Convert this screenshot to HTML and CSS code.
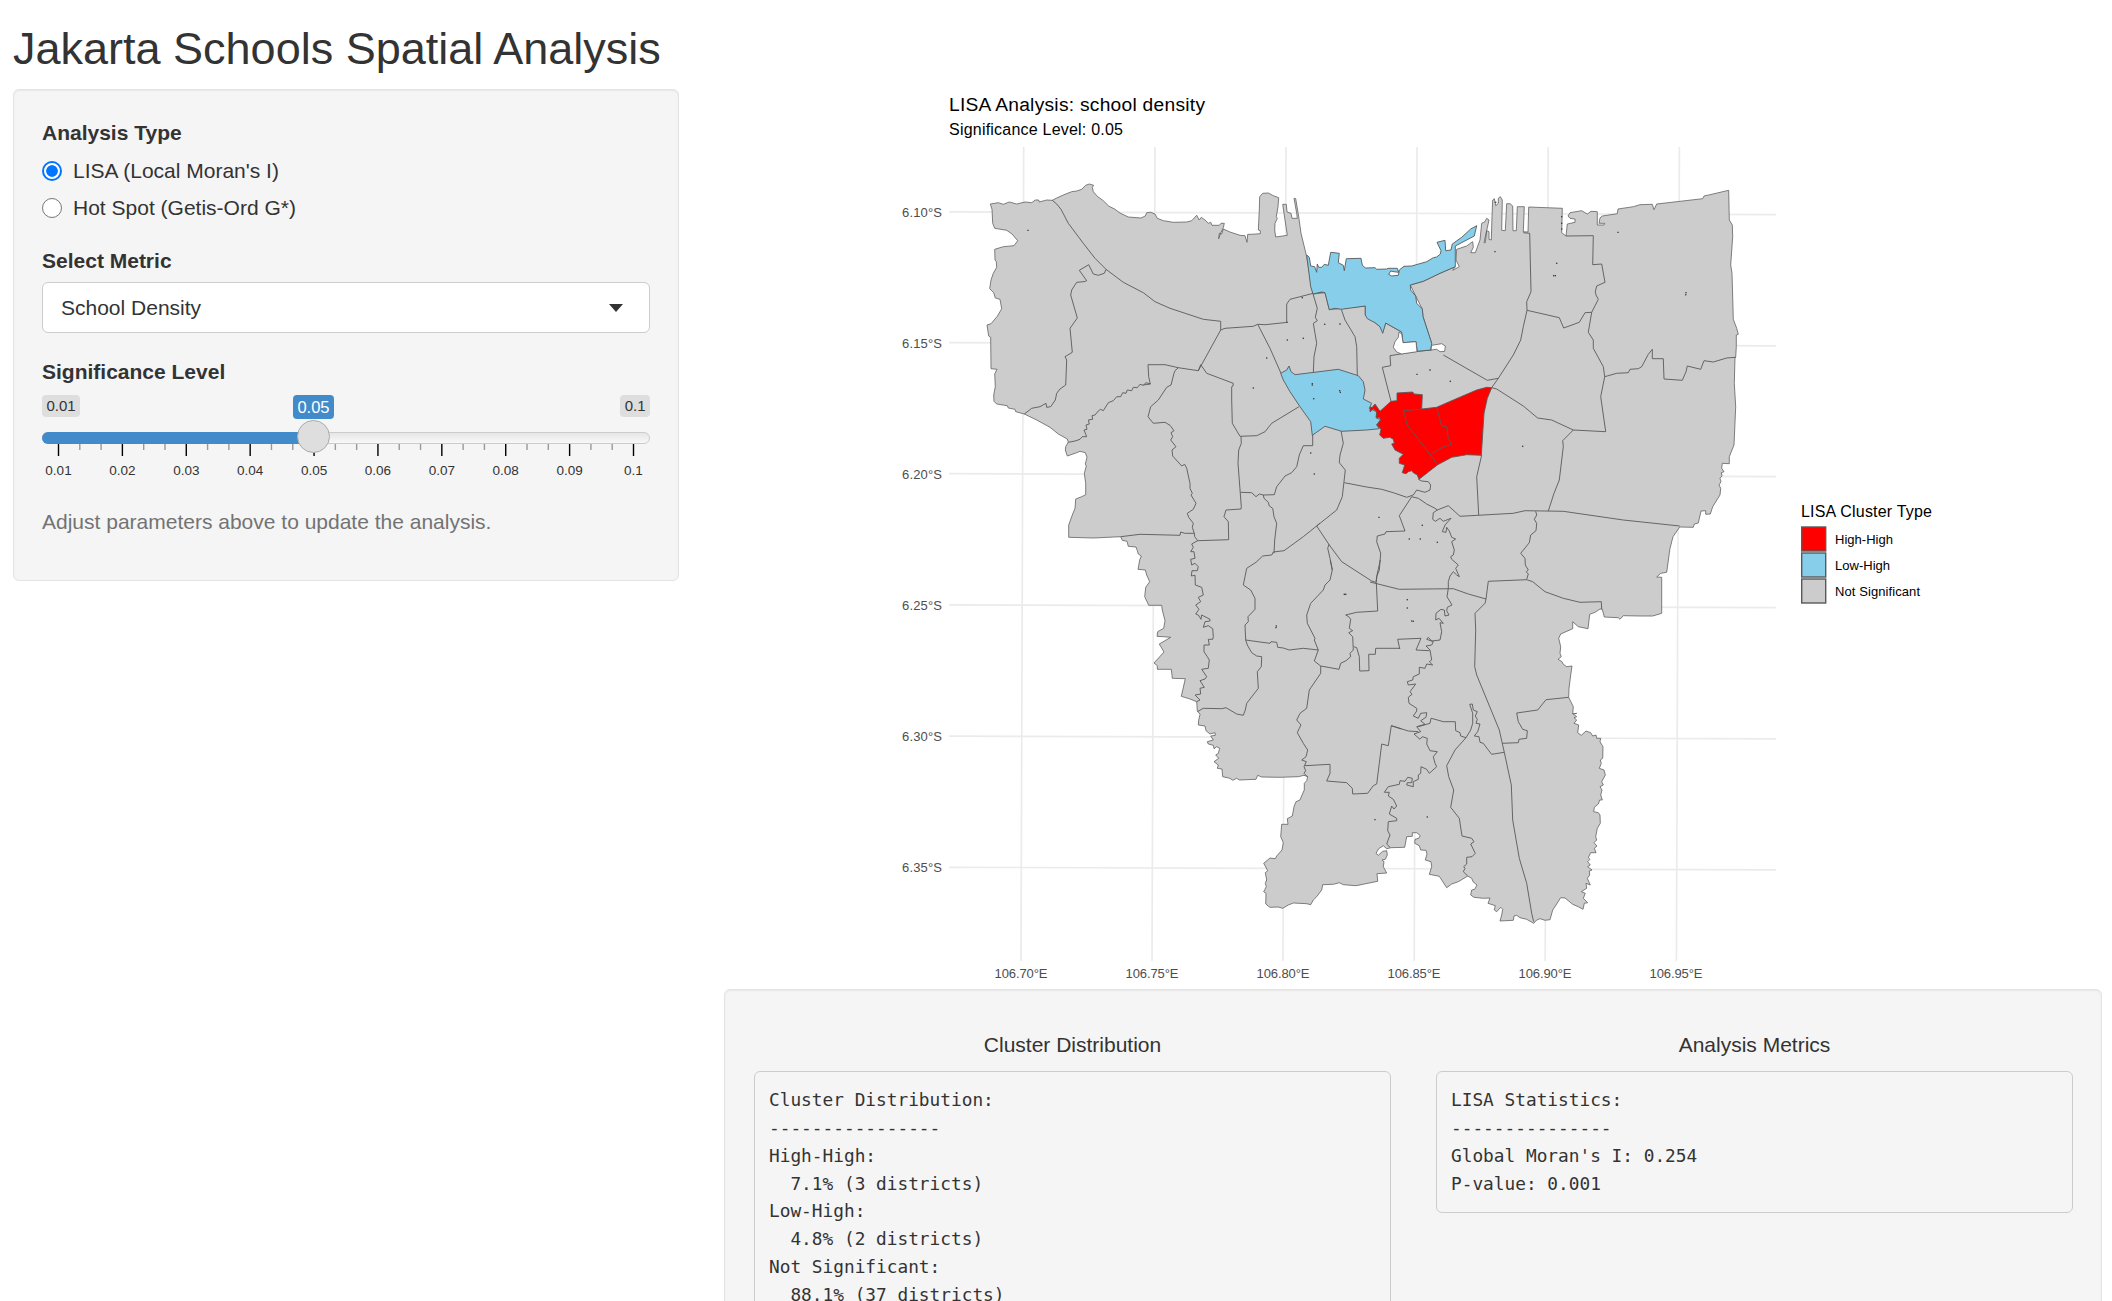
FILE: index.html
```html
<!DOCTYPE html>
<html lang="en">
<head>
<meta charset="utf-8">
<title>Jakarta Schools Spatial Analysis</title>
<link rel="stylesheet" href="styles.css">
</head>
<body>
<h1 class="page-title">Jakarta Schools Spatial Analysis</h1>
<div class="layout">
  <form class="well sidebar">
    <div class="group-label">Analysis Type</div>
    <div class="radios">
      <label class="radio"><span class="dot dot-on"></span>LISA (Local Moran's I)</label>
      <label class="radio"><span class="dot"></span>Hot Spot (Getis-Ord G*)</label>
    </div>
    <div class="group-label">Select Metric</div>
    <div class="select"><span>School Density</span><span class="caret"></span></div>
    <div class="group-label">Significance Level</div>
    <div class="slider">
      <div class="slider-labels"><span class="edge">0.01</span><span class="edge">0.1</span><span class="current">0.05</span></div>
      <div class="track"><div class="fill"></div><div class="handle"></div></div>
      <svg class="scale" id="scale" width="608" height="38"></svg>
    </div>
    <p class="help">Adjust parameters above to update the analysis.</p>
  </form>
  <main class="main">
    <svg class="plot" viewBox="724 89 1378 900" width="1378" height="900">
      <g class="grid">
        <path d="M1023.7 147L1021 961M1155 147L1152 961M1286 147L1283 961M1417 147L1414.2 961M1548.2 147L1545.2 961M1679.4 147L1676.4 961"/>
        <path d="M949 211.8L1776 214.6M949 342.7L1776 345.8M949 473.7L1776 476.6M949 604.9L1776 607.6M949 736.2L1776 738.8M949 867.3L1776 869.8"/>
      </g>
      <g id="map"></g>
      <text class="t-title" x="949" y="111" textLength="256">LISA Analysis: school density</text>
      <text class="t-sub" x="949" y="135" textLength="174">Significance Level: 0.05</text>
      <g class="axis">
        <text x="902" y="217" textLength="40">6.10°S</text>
        <text x="902" y="348" textLength="40">6.15°S</text>
        <text x="902" y="479" textLength="40">6.20°S</text>
        <text x="902" y="610" textLength="40">6.25°S</text>
        <text x="902" y="741" textLength="40">6.30°S</text>
        <text x="902" y="872" textLength="40">6.35°S</text>
        <text x="994.5" y="978" textLength="53">106.70°E</text>
        <text x="1125.5" y="978" textLength="53">106.75°E</text>
        <text x="1256.5" y="978" textLength="53">106.80°E</text>
        <text x="1387.5" y="978" textLength="53">106.85°E</text>
        <text x="1518.5" y="978" textLength="53">106.90°E</text>
        <text x="1649.5" y="978" textLength="53">106.95°E</text>
      </g>
      <g class="keys">
        <rect class="high" x="1801.7" y="527" width="24" height="24"/>
        <rect class="low" x="1801.7" y="553" width="24" height="24"/>
        <rect class="none" x="1801.7" y="579" width="24" height="24"/>
      </g>
      <text class="t-sub" x="1801" y="517" textLength="131">LISA Cluster Type</text>
      <g class="t-key">
        <text x="1835" y="544" textLength="58">High-High</text>
        <text x="1835" y="570" textLength="55">Low-High</text>
        <text x="1835" y="596" textLength="85">Not Significant</text>
      </g>
    </svg>
    <div class="well results">
      <section class="result">
        <h4>Cluster Distribution</h4>
<pre>Cluster Distribution:
----------------
High-High:
  7.1% (3 districts)
Low-High:
  4.8% (2 districts)
Not Significant:
  88.1% (37 districts)
</pre>
      </section>
      <section class="result">
        <h4>Analysis Metrics</h4>
<pre>LISA Statistics:
---------------
Global Moran's I: 0.254
P-value: 0.001
</pre>
      </section>
    </div>
  </main>
</div>
<script src="map.js"></script>
</body>
</html>
```
FILE: styles.css
```css
* { box-sizing: border-box; }
html, body { height: 100%; }
body {
  margin: 0;
  padding: 0 10px 0 13px;
  overflow: hidden;
  background: #fff;
  color: #333;
  font: 21px/30px "Liberation Sans", Arial, sans-serif;
}
.page-title { margin: 0; padding-top: 24px; height: 89px; font-size: 45px; line-height: 50px; font-weight: 400; }
.layout { display: flex; justify-content: space-between; align-items: flex-start; }
.well {
  background: #f5f5f5;
  border: 1px solid #e3e3e3;
  border-radius: 6px;
  box-shadow: inset 0 1px 2px rgba(0, 0, 0, .06);
}
.sidebar { width: 666px; height: 492px; padding: 28px; }
.group-label { font-weight: 700; height: 37px; }
.radios { height: 91px; }
.radio { display: flex; align-items: center; gap: 11px; height: 30px; margin-bottom: 7px; padding-top: 1px; }
.dot { width: 20px; height: 20px; border: 1.5px solid #767676; border-radius: 50%; background: #fff; }
.dot-on { border: 2px solid #0075ff; background: radial-gradient(circle, #0075ff 0 5.4px, #fff 6.2px); }
.select {
  display: flex; align-items: center; justify-content: space-between;
  height: 51px; margin: -1px 0 24px; padding: 0 26px 0 18px;
  background: #fff; border: 1px solid #ccc; border-radius: 6px;
}
.caret { border: 7px solid transparent; border-top: 8px solid #333; border-bottom: 0; }
.slider { position: relative; height: 105px; padding-top: 1px; }
.slider-labels { position: relative; display: flex; justify-content: space-between; height: 37px; }
.edge { height: 22px; padding: 0 4.5px; border-radius: 4px; background: #dedede; font-size: 15px; line-height: 22px; }
.current {
  position: absolute; left: 251px; top: 0; width: 41px; height: 24px;
  border-radius: 4px; background: #428bca; color: #fff; font-size: 16.5px; line-height: 24px; text-align: center;
}
.track {
  position: relative; height: 12px; border: 1px solid #ccc; border-radius: 6px;
  background: linear-gradient(#e6e6e6, #f8f8f8);
}
.fill { width: 272px; height: 12px; margin: -1px; border-radius: 6px 0 0 6px; background: #428bca; }
.handle {
  position: absolute; left: 254px; top: -13px; width: 33px; height: 33px;
  border: 1px solid #ababab; border-radius: 50%; background: #dedede;
}
.scale { display: block; }
.scale .major { stroke: #000; stroke-width: 1.4; }
.scale .minor { stroke: #999; stroke-width: 1.4; }
.scale text { font-size: 13.5px; fill: #333; text-anchor: middle; }
.help { margin: 8px 0 0; color: #737373; }

.main { width: 1378px; }
.plot { display: block; margin: 0; }
.plot text { font-family: "Liberation Sans", Arial, sans-serif; fill: #000; }
.plot .t-title { font-size: 19.2px; }
.plot .t-sub { font-size: 16px; }
.plot .t-key text { font-size: 13px; }
.plot .axis text { font-size: 13px; fill: #4d4d4d; }
.grid path { fill: none; stroke: #ebebeb; stroke-width: 1.7; }
.keys rect { stroke: #595959; stroke-width: 1.4; }
.high { fill: #f00; }
.low { fill: #87ceeb; }
.none { fill: #ccc; }
.hole { fill: #fff; }
#map path { stroke: #595959; stroke-width: .9; stroke-linejoin: round; }
#map path.none, #map path.hole { stroke-width: .75; }
#map .border { fill: none; }
#map .speck { fill: none; stroke: #444; stroke-width: 1.4; }

.results { display: flex; gap: 45px; height: 400px; padding: 40px 28px 40px 29px; }
.result { flex: 1; }
.result h4 { margin: 0 0 11px; font-size: 21px; line-height: 30px; font-weight: 400; text-align: center; }
pre {
  margin: 0; padding: 14px 14px 15px; border: 1px solid #ccc; border-radius: 6px;
  font: 17.8px/27.86px "DejaVu Sans Mono", monospace;
}
```
FILE: map.js
```javascript
// Each map sheet is digitised at three units per pixel from its own origin.
const sheets = {
  A: [880, 80], B: [1280, 160], C: [880, 340],
  D: [1290, 340], E: [1100, 560], F: [1350, 560]
};

function toPoints(sheet, text) {
  const [ox, oy] = sheets[sheet];
  return text.trim().split(/\s+/).map(p => {
    const [x, y] = p.split(',').map(Number);
    return [ox + x / 3, oy + y / 3];
  });
}
const toPath = pts => 'M' + pts.map(p => p[0].toFixed(1) + ' ' + p[1].toFixed(1)).join('L');

const ns = 'http://www.w3.org/2000/svg';
function add(parent, tag, attrs, text) {
  const el = document.createElementNS(ns, tag);
  for (const k in attrs) el.setAttribute(k, attrs[k]);
  if (text) el.textContent = text;
  parent.appendChild(el);
}
const map = document.getElementById('map');

// Province outline, counter-clockwise from the western edge.
const coast = [
  ['C', '332,0 333,86 351,88 344,102 346,140 341,165 342,184 350,192 382,197 385,204 405,208 407,215 433,222 470,240 510,262 535,282 562,297 565,306 557,320 556,330 562,348 590,338 600,334 616,338 621,352 616,372 619,378 613,400 617,430 617,464 605,470 587,477 585,505 577,525 566,555 566,592 640,594 722,590 727,601 741,604 745,619 768,621 772,632 775,642 784,648 779,660 774,688 796,690 800,705 809,725 797,742 794,770 806,796'],
  ['E', '185,136 187,150 195,182 191,205 173,215 171,229 190,230 212,232 178,252 192,276 162,309 172,317 172,328 214,328 217,355 256,356 244,409 270,417 290,425 292,452 300,463 296,480 295,495 315,498 318,512 330,522 345,518 346,526 332,528 340,540 322,545 325,552 340,556 342,566 350,560 359,565 355,580 347,585 356,595 342,605 355,615 352,625 366,627 368,650 390,655 398,661 410,655 418,660 468,658 473,646 485,651 540,652 595,650 612,646 623,650 620,662 613,670 613,690 606,705 600,720 588,725 582,740 577,768 562,776 564,793 545,793 542,830 550,848 546,870 530,888 526,896 510,894 491,910 503,932 496,938 500,960 496,970 499,980 491,995 498,1000 497,1032 510,1042 535,1041 548,1045 565,1035 580,1029 620,1031 632,1034 640,1020 650,1010 665,990 668,974 700,973 718,968 730,974 768,977 833,964 831,941 860,939 850,920 852,905 846,900 856,898 862,885 860,872 848,874 835,886 828,880 836,866 850,857 860,866 873,863'],
  ['F', '164,862 170,830 187,829 187,818 200,818 211,827 206,835 195,838 194,850 208,857 212,870 228,871 231,882 226,900 243,905 245,920 238,943 268,949 290,983 305,972 325,965 353,948 365,955 369,965 381,975 374,988 365,990 362,1005 372,1012 400,1015 420,1014 414,1030 436,1037 433,1050 440,1055 452,1042 458,1048 455,1065 450,1083 490,1081 492,1068 500,1066 510,1073 530,1078 551,1090 560,1080 570,1076 585,1081 600,1079 608,1050 618,1035 632,1013 645,1014 668,1033 685,1040 699,1048 703,1030 713,1028 700,1015 706,1000 694,995 710,985 708,970 721,975 712,955 719,945 718,933 726,930 713,920 721,915 713,905 720,898 715,893 722,878 738,878 733,865 741,858 732,848 740,840 737,830 742,805 751,790 750,765 745,758 731,755 733,742 745,732 749,720 757,720 752,705 756,690 750,680 760,675 755,665 766,645 762,630 748,625 754,610 751,600 758,595 759,560 750,545 752,535 740,535 738,525 728,528 722,518 708,513 694,526 683,518 686,495 672,490 680,480 672,473 680,470 670,462 680,460 668,462 670,440 660,420 656,412 657,385 662,345 666,318 650,320 640,313 636,305 624,298 634,290 630,280 632,260 626,235 632,222 668,206 668,185 685,200 714,206 719,163 735,157 750,147 757,148'],
  ['D', '943,831 985,833 990,838 1000,827 1050,828 1088,828 1115,820 1115,712 1100,711 1112,700 1130,697 1138,640 1140,625 1149,590 1169,561 1210,562 1213,552 1225,549 1233,513 1247,512 1247,523 1261,522 1268,500 1290,465 1292,445 1287,435 1293,425 1290,415 1296,408 1294,398 1302,395 1295,385 1297,370 1318,371 1318,350 1332,315 1337,200 1333,130 1335,52'],
  ['B', '1367,592 1369,560 1369,525 1375,523 1370,505 1360,478 1356,340 1352,315 1358,230 1357,195 1348,180 1346,91 1290,104 1272,108 1268,116 1130,132 1122,149 1117,133 1080,134 1060,140 1014,147 1012,161 967,168 960,174 957,190 974,190 972,195 952,195 952,155 933,154 922,162 905,152 870,158 864,168 870,175 885,177 885,187 862,192 858,228 845,218 847,145 746,141 744,216 730,215 733,140 712,140 709,212 699,212 698,138 690,131 680,131 676,212 665,211 667,120 661,110 655,115 655,130 647,137 643,116 638,120 636,170 634,240 627,238 627,215 620,212 616,248 612,248 627,180 620,175 615,185 605,190 600,240 586,278 572,278 580,262 578,245 560,258 530,268 528,300 538,320 518,331 526,320 480,340 430,364 391,375 407,408 427,447 429,470 455,550 365,516 317,489 308,515 300,500 285,488 256,465 256,438 148,449 135,398 99,402 80,290']
];
const northWest = toPoints('A', '332,772 326,768 321,735 333,731 352,709 365,686 360,658 346,654 341,638 329,626 333,600 340,580 350,562 349,545 345,540 344,508 370,500 402,497 413,482 396,462 380,451 344,445 338,430 336,388 331,372 355,368 370,373 388,366 410,372 435,366 455,368 466,360 476,360 478,366 500,360 517,361 530,354 555,343 575,335 590,333 605,328 617,316 628,312 641,316 637,322 640,335 652,349 670,362 686,378 705,388 720,399 745,411 783,414 796,408 800,398 812,397 825,402 832,415 850,422 880,427 920,426 935,422 950,406 958,420 964,412 975,420 985,430 992,427 996,436 1018,436 1023,430 1033,430 1030,443 1021,462 1016,476 1018,460 1025,462 1030,447 1050,456 1080,466 1095,467 1101,487 1103,463 1114,463 1141,461 1141,452 1135,450 1138,390 1139,350 1148,340 1165,339 1180,347 1196,353 1194,380 1189,410 1192,415 1185,430 1184,450 1187,471 1222,466 1218,440 1208,373 1219,373 1221,396 1233,400 1236,415 1252,415 1250,400 1242,355 1247,356 1256,410 1263,460 1279,525').reverse();
const land = coast.flatMap(([s, t]) => toPoints(s, t)).concat(northWest);
add(map, 'path', { class: 'none', d: toPath(land) + 'Z' });

// District boundaries.
const borders = [
  ['A', '517,361 530,372 543,388 565,430 610,490 645,535 678,568 730,607 790,638 825,665 870,685 970,718 1022,724 1022,750 955,872 895,863 855,854 804,854 806,890 811,912 790,915'],
  ['C', '811,132 798,128 790,136 780,133 772,143 760,142 755,152 742,150 738,160 728,158 722,170 710,170 700,182 685,188 670,212 662,208 655,213 645,225 636,227 638,238 625,240 628,252 618,255 621,268 612,270 620,290 607,290 600,298 585,303 565,307'],
  ['A', '678,568 673,580 655,586 640,582 626,554 598,571 620,602 612,605 590,607 575,630 572,645 592,714 570,745 577,817 555,830 560,840 557,915 540,927 530,940 526,960'],
  ['C', '526,180 512,200 500,202 498,190 480,200 455,205 433,222'],
  ['A', '1022,750 1035,745 1120,739 1133,733 1155,734 1224,727 1220,727 1220,672 1230,658 1300,640 1338,636'],
  ['A', '1133,733 1170,805 1203,880'],
  ['A', '955,872 962,854 980,880 1060,910 1059,918 1055,920 1055,960'],
  ['C', '1055,180 1057,250 1080,289 1130,287 1155,275 1175,250 1257,200'],
  ['A', '895,863 885,872 882,880 873,915 860,922 835,960'],
  ['C', '835,180 812,200 804,230 820,250 855,247 870,256 882,272 873,278 878,290 872,300 888,320 876,330 878,348 905,378 914,373 920,385 930,430 930,445 937,460 933,465 948,490 940,508 922,520 926,532 940,550 937,562 943,580 944,590 953,602'],
  ['C', '1083,289 1084,310 1076,330 1074,370 1084,500 1083,507 1038,510 1032,530 1045,545 1046,599 953,602'],
  ['C', '1082,457 1115,458 1128,470 1138,462 1150,465 1183,464 1190,440 1210,415 1215,408 1235,398 1250,380 1258,345 1270,317 1298,317 1298,285'],
  ['C', '1150,465 1152,475 1165,487 1168,498 1178,505 1182,530 1190,550 1184,600 1182,640'],
  ['C', '722,590 780,583 900,586 902,576 914,580 943,580'],
  ['C', '953,602 935,612 940,622 932,635 942,635 945,655 932,658 935,675 945,670 955,680 952,692 936,692 934,708 945,706 946,735 965,742 970,765 955,772 962,785 947,795 957,808 947,822 955,825 963,838 965,825 990,838 990,843 975,845 970,862 985,857 998,866 1000,890'],
  ['E', '340,230 338,238 325,238 328,255 312,255 312,275 322,290 328,300 325,325 305,328 320,350 315,357 300,362 313,382 300,385 302,402 285,405 300,420 290,425'],
  ['C', '1320,549 1311,557 1270,590 1212,632 1180,636 1175,645 1148,648 1128,667 1100,685 1095,710 1090,735 1112,750 1125,775 1125,808 1104,830 1105,845 1095,855 1097,900'],
  ['E', '437,240 442,255 455,278 470,288 485,290 484,320 472,335 475,385 440,430 436,450 430,466 410,462 378,443 365,446 310,445 292,455'],
  ['E', '437,240 480,246 510,250 513,245 530,247 533,262 550,264 568,270 610,265 655,270'],
  ['E', '691,0 697,30 690,60 675,75 670,90 632,130 620,165 622,190 645,235 643,240 655,270 643,303 662,318 662,340 628,390 620,445 600,460 590,480 603,495 598,505 592,518 610,550 623,570 618,590 605,600 619,605 612,620 617,632 612,640 622,650'],
  ['E', '662,318 717,328 722,310 738,302 752,290 750,280 760,270 758,230 746,218 758,212 748,205 752,178 746,170 737,165 770,157 833,153 829,67 831,45 841,0'],
  ['E', '762,260 770,263 778,290 779,333 807,332 806,283 826,283 827,265 900,265'],
  ['F', '150,265 149,266 143,238 213,235 198,270 238,272'],
  ['F', '60,66 148,88 310,86 355,102 408,117'],
  ['E', '615,617 690,613 690,640 680,663 740,668 757,685 758,702 803,700 820,677 830,672 838,610 845,552 865,557 874,497 905,507'],
  ['F', '124,497 175,513 205,515'],
  ['D', '365,470 385,475 410,492 435,505 442,510 430,518 428,538 436,544 450,535 460,544 483,535 465,555 457,575 468,577 470,562 478,573 485,592 497,597 485,605 493,630 490,645 482,650 485,658 505,675 497,685 508,710 500,705 490,695 480,708 475,725 475,745'],
  ['F', '295,85 291,110 306,135 292,142 290,152 297,165 285,168 283,150 273,148 258,160 257,180 267,175 280,190 270,188 275,215 270,240 245,243 235,232 230,238 250,245 245,255 228,258 240,270 245,300 238,305 248,315 230,312 225,325 208,322 208,342 190,350 188,360 172,365 175,375 197,372 180,395 186,403 175,412 177,430 200,445 200,453 190,468 205,475 212,460 230,458 228,472 212,482 225,493 200,500 212,515 192,522 210,538 217,530 232,535 230,552 240,572 262,575 250,590 255,610 260,620 238,640 230,628 213,620 212,640 205,645 205,658 190,665 190,680 170,675 172,668 185,668 187,655 173,652 165,664 150,662 148,673 115,680 103,697 118,697 115,708 130,718 140,738 132,747 125,738 118,762 140,775 140,782 115,785 113,812 120,825 110,852 120,862'],
  ['F', '205,500 240,490 243,475 255,478 280,485 316,485 317,512 330,518 332,528 348,533 315,570 290,617 296,650 311,690 302,742 328,775 336,828 365,835 372,845 362,852 376,880 366,890 350,892 350,912 341,920 345,925 340,935 353,948'],
  ['F', '348,533 362,510 368,490 368,460 359,433 367,432 370,450 382,455 376,468 382,478 378,490 390,492 383,515 373,528 387,530 390,547 400,550 415,570 425,583 463,577'],
  ['F', '408,117 405,130 375,160 377,210 374,320 380,345 448,510 463,577 484,675 488,780 508,895 530,970 545,1060 551,1085'],
  ['F', '408,117 415,64 530,59 548,65 585,95 640,115 690,127 754,125 755,148'],
  ['F', '457,550 505,548 507,538 530,535 532,512 518,508 505,485 500,459 563,450 588,419 656,412'],
  ['B', '858,228 940,227 938,314 965,312 975,367 950,378 946,395 948,405 955,418 935,457 915,458 898,487 851,504 838,473 741,451 740,425 753,395 749,220 730,218'],
  ['B', '741,451 730,500 722,540 700,585 655,655 635,683'],
  ['B', '655,655 622,661 490,585'],
  ['B', '935,457 925,517 940,540 940,565 970,620 974,650 962,710 977,815 880,810 815,780 773,774 730,738 650,687 635,683'],
  ['B', '974,650 1010,640 1045,638 1050,628 1075,626 1085,620 1105,583 1117,568 1117,596 1150,596 1152,657 1207,661 1218,635 1222,618 1262,628 1272,602 1300,606 1340,594 1367,592'],
  ['B', '880,810 848,842 850,860 838,960'],
  ['D', '808,420 792,460 775,513'],
  ['D', '575,345 560,410 566,525'],
  ['D', '385,418 395,423 415,425 422,435 420,450 405,457 380,450 370,465 350,472 310,458 275,448 230,441 163,428'],
  ['D', '442,510 475,497 510,529 670,520 705,512 820,514 1000,540 1169,558'],
  ['D', '737,514 740,525 733,538 740,550 738,572 722,585 718,608 692,640 705,655 706,675 715,690 709,695 715,702 710,718'],
  ['D', '365,470 328,527 345,573 288,575 285,582 262,588 260,605 272,640 268,690 260,710 258,725'],
  ['D', '80,558 118,615 155,665 245,723 258,727'],
  ['D', '117,613 113,625 120,655 127,690'],
  ['D', '153,272 160,310 150,345 148,368 166,390 157,470 140,510 80,558'],
  ['B', '99,402 112,445 106,472 112,482 100,490 110,550 102,590 100,640'],
  ['B', '184,448 195,480 225,530 230,560 232,645'],
  ['B', '455,570 412,574 330,587 332,617 307,622 333,724']
];
for (const [s, t] of borders) add(map, 'path', { class: 'border', d: toPath(toPoints(s, t)) });

// Classified districts and the gaps around them.
const areas = [
  ['low', '80,285 88,292 92,318 104,320 110,337 112,312 116,322 125,322 133,313 145,316 152,277 178,280 175,308 190,316 193,332 199,296 243,295 247,315 256,324 285,323 290,328 320,327 324,325 352,325 356,337 342,335 332,333 326,343 335,348 355,346 358,330 372,319 395,318 440,305 460,293 470,291 481,282 483,272 471,247 495,241 497,272 513,270 517,252 545,232 572,207 590,197 583,228 526,258 526,320 480,340 430,364 391,375 392,390 407,408 410,430 427,447 429,470 455,550 452,570 412,574 408,545 369,548 365,516 317,489 308,520 300,500 285,488 262,476 256,465 256,438 184,448 165,445 148,449 135,398 125,396 99,402 92,380'],
  ['low', '2,640 20,630 27,618 33,635 45,644 175,628 235,647 250,665 255,690 250,717 275,730 268,745 290,755 290,775 302,778 290,795 298,806 260,810 185,814 135,799 97,826 92,785 60,740 30,695 10,660'],
  ['high', '333,724 351,722 351,699 398,696 402,702 427,704 425,747 470,742 520,720 590,690 620,682 635,683 622,715 612,760 604,886 560,884 515,892 473,914 417,958 412,945 400,938 395,932 385,935 378,941 367,938 374,915 358,910 358,895 370,883 345,870 335,852 343,850 340,838 330,832 310,835 299,825 303,808 290,795 302,780 298,772 288,773 290,755 280,747 270,755 270,742 277,742 285,732 300,754'],
  ['hole', '357,516 355,532 345,545 340,562 350,576 365,582 411,575 408,545 369,548 365,522'],
  ['hole', '455,556 485,551 496,558 494,574 480,575 470,568 453,570']
];
for (const [kind, t] of areas) add(map, 'path', { class: kind, d: toPath(toPoints('B', t)) + 'Z' });
for (const t of ['425,747 370,752 382,795 451,884 473,914', '451,884 487,862 515,853 505,835 500,800 485,798 470,742'])
  add(map, 'path', { class: 'border', d: toPath(toPoints('B', t)) });

// Tiny enclaves.
const specks = {
  A: '444,451 1120,924 1160,834 1267,653',
  B: '134,493 180,492 22,540 70,535 411,643 450,630 511,664 97,671 97,675 179,692 181,697 101,716 645,275 830,310 821,347 826,347 1014,217 1218,398 1217,404 728,859 92,879 103,942 647,127 845,170 845,190 845,207',
  D: '267,532 397,556 358,597 391,597 442,607 163,763 167,763 352,779 352,804 365,843 370,844',
  E: '529,198 528,203 825,779',
  F: '232,771'
};
for (const s in specks)
  for (const [x, y] of toPoints(s, specks[s]))
    add(map, 'path', { class: 'speck', d: `M${x - .7} ${y}h1.4` });

// Slider scale.
const scale = document.getElementById('scale');
for (let i = 0; i <= 27; i++) {
  const x = 16.5 + i * 575 / 27;
  const major = i % 3 === 0;
  add(scale, 'path', { class: major ? 'major' : 'minor', d: `M${x} 0v${major ? 12 : 6}` });
  if (major) add(scale, 'text', { x: x, y: 30.5 }, String((i / 3 + 1) / 100));
}
```
